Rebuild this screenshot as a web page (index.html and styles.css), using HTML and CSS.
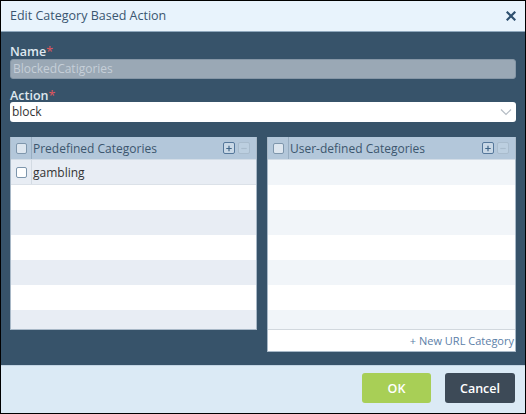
FILE: index.html
```html
<!DOCTYPE html>
<html>
<head>
<meta charset="utf-8">
<link rel="stylesheet" href="styles.css">
</head>
<body>
<div class="dialog">
  <div class="titlebar">
    <span class="title">Edit Category Based Action</span>
    <svg class="close" width="10" height="10" viewBox="0 0 10 10"><path d="M1.5 1.5 L8.5 8.5 M8.5 1.5 L1.5 8.5" stroke="#2d4f6e" stroke-width="2.2" stroke-linecap="square"/></svg>
  </div>
  <div class="content">
    <div class="label">Name<span class="req">*</span></div>
    <div class="input disabled">BlockedCatigories</div>
    <div class="label second">Action<span class="req">*</span></div>
    <div class="input select">
      <span>block</span>
      <svg width="12" height="8" viewBox="0 0 12 8"><path d="M1 1.5 L6 6.5 L11 1.5" fill="none" stroke="#b4bcc4" stroke-width="1.2"/></svg>
    </div>
    <div class="panels">
      <div class="panel left">
        <div class="phead">
          <div class="cbcell"><span class="cb"></span></div>
          <div class="ptitle">Predefined Categories</div>
          <div class="tools">
            <span class="tbtn plus"><svg width="11" height="11" viewBox="0 0 11 11"><path d="M5.5 2.5 V8.5 M2.5 5.5 H8.5" stroke="#3f6486" stroke-width="1.3"/></svg></span>
            <span class="tbtn minus"><svg width="11" height="11" viewBox="0 0 11 11"><path d="M2.5 5.5 H8.5" stroke="#a9bccd" stroke-width="1.3"/></svg></span>
          </div>
        </div>
        <div class="rows">
          <div class="row first"><div class="cbcell"><span class="cb"></span></div><div class="rtext">gambling</div></div>
          <div class="row"></div>
          <div class="row"></div>
          <div class="row"></div>
          <div class="row"></div>
          <div class="row"></div>
          <div class="row"></div>
        </div>
      </div>
      <div class="panel right">
        <div class="phead">
          <div class="cbcell"><span class="cb"></span></div>
          <div class="ptitle">User-defined Categories</div>
          <div class="tools">
            <span class="tbtn plus"><svg width="11" height="11" viewBox="0 0 11 11"><path d="M5.5 2.5 V8.5 M2.5 5.5 H8.5" stroke="#3f6486" stroke-width="1.3"/></svg></span>
            <span class="tbtn minus"><svg width="11" height="11" viewBox="0 0 11 11"><path d="M2.5 5.5 H8.5" stroke="#a9bccd" stroke-width="1.3"/></svg></span>
          </div>
        </div>
        <div class="rows">
          <div class="row"></div>
          <div class="row"></div>
          <div class="row"></div>
          <div class="row"></div>
          <div class="row"></div>
          <div class="row"></div>
          <div class="row"></div>
        </div>
        <div class="pfoot">+ New URL Category</div>
      </div>
    </div>
  </div>
  <div class="footer">
    <button class="btn ok">OK</button>
    <button class="btn cancel">Cancel</button>
  </div>
</div>
</body>
</html>
```
FILE: styles.css
```css
* { box-sizing: border-box; }
html, body { margin: 0; padding: 0; }
body { font-family: "Open Sans", "Noto Sans", sans-serif; }
.dialog {
  width: 526px;
  height: 414px;
  border: 1px solid #000;
  display: flex;
  flex-direction: column;
  background: #37536a;
}
.titlebar {
  height: 31px;
  background: #e8f3fc;
  border-bottom: 1px solid #8fa8bd;
  display: flex;
  align-items: center;
  justify-content: space-between;
  padding: 0 9px 1px 9px;
}
.title { font-size: 12.5px; color: #3a5670; }
.close { margin-top: 1px; }
.content {
  flex: 1;
  padding: 10px 9px 0 9px;
}
.label {
  font-size: 12.5px;
  font-weight: 600;
  color: #dfe8f0;
  line-height: 19px;
  height: 17px;
}
.label.second { margin-top: 7px; height: 16px; }
.req { color: #e2565d; font-weight: 400; }
.input {
  height: 20px;
  border-radius: 3px;
  font-size: 12px;
  line-height: 20px;
  padding: 0 2px;
}
.disabled { background: #9aa8b5; color: #c6cfd8; border: 1px solid #8596a6; line-height: 18px; }
.select {
  background: #fff;
  color: #333;
  display: flex;
  align-items: center;
  justify-content: space-between;
  padding: 0 4px 0 2px;
}
.panels {
  display: flex;
  gap: 10px;
  margin-top: 15px;
  align-items: flex-start;
}
.panel {
  background: #fff;
  border: 1px solid #a8b8c7;
  border-top: 0;
  display: flex;
  flex-direction: column;
}
.panel.left { width: 247px; }
.panel.right { width: 249px; }
.phead {
  height: 23px;
  background: #b3c7da;
  display: flex;
  align-items: center;
  border-bottom: 1px solid #d3dde7;
}
.cbcell {
  width: 21px;
  height: 100%;
  border-right: 1px solid #98aec2;
  display: flex;
  align-items: center;
  justify-content: center;
}
.cb {
  width: 11px;
  height: 11px;
  border: 1px solid #7e96ac;
  border-radius: 2px;
  background: #dde6ef;
}
.ptitle {
  flex: 1;
  font-size: 12px;
  color: #3c566e;
  padding-left: 1px;
}
.tools { display: flex; gap: 3px; padding-right: 6px; }
.tbtn {
  width: 12px;
  height: 12px;
  border-radius: 2px;
  display: flex;
  align-items: center;
  justify-content: center;
}
.tbtn.plus { border: 1px solid #55779a; background: #c9d8e6; }
.tbtn.minus { border: 1px solid #a9bccd; background: #bccfe0; }
.rows { height: 169px; overflow: hidden; }
.row { height: 25px; display: flex; align-items: center; }
.left .row:nth-child(odd) { background: #e8edf4; }
.left .row:nth-child(even) { background: #fff; }
.right .row:nth-child(odd) { background: #f1f5f9; }
.right .row:nth-child(even) { background: #fff; }
.row.first { border-bottom: 1px solid #dbe1e8; }
.row .cb { background: #fff; }
.row .cbcell { border-right: 1px solid #d3dbe3; }
.rtext { font-size: 12px; color: #333; padding-left: 1px; }
.pfoot {
  height: 22px;
  border-top: 1px solid #d2d8de;
  font-size: 11px;
  color: #5c80a8;
  text-align: right;
  padding-right: 1px;
  line-height: 21px;
}
.footer {
  height: 48px;
  background: #dbeaf5;
  border-top: 1px solid #c3d5e4;
  display: flex;
  justify-content: flex-end;
  align-items: center;
  gap: 14px;
  padding: 0 10px 3px 0;
}
.btn {
  font-family: "Open Sans", "Noto Sans", sans-serif;
  height: 30px;
  border: 0;
  border-radius: 3px;
  color: #fff;
  font-size: 12.5px;
  font-weight: 600;
  padding: 0;
}
.btn.ok { width: 69px; background: #a8cf56; }
.btn.cancel { width: 70px; background: #3d4a57; }
```
